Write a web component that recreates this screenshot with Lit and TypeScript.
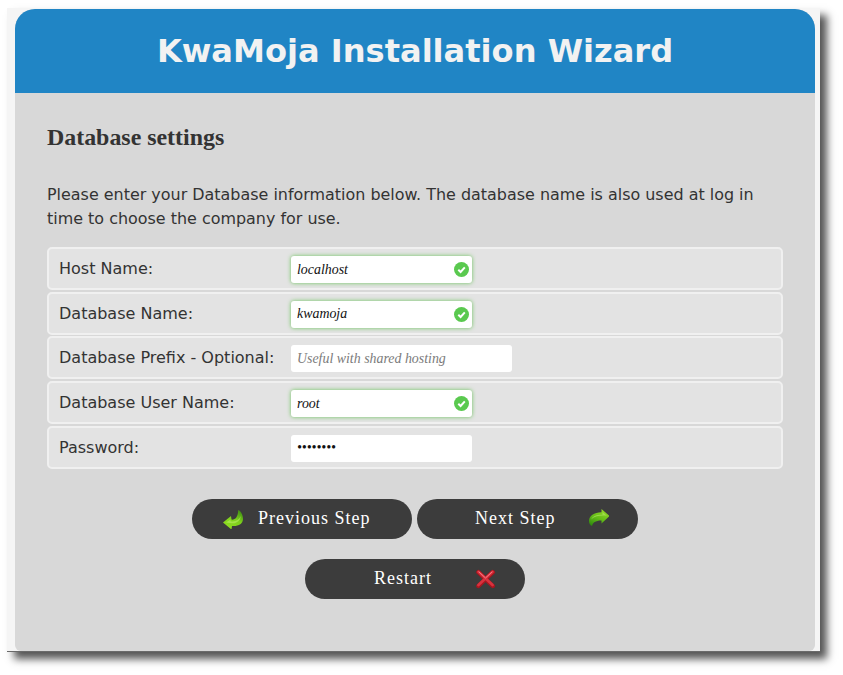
import { LitElement, html, css } from "lit";
import { customElement } from "lit/decorators.js";

const prevArrow = html`<svg class="ico" viewBox="0 0 20 20" width="20" height="20">
  <defs><linearGradient id="g1" x1="0.2" y1="0.9" x2="0.8" y2="0"><stop offset="0" stop-color="#8fdc20"/><stop offset="0.55" stop-color="#7ccf1c"/><stop offset="1" stop-color="#3f8f12"/></linearGradient></defs>
  <path d="M0 13.5 L8 7 L8.5 10.6 C12 11 15 8.5 15.2 1 C18 2 20 6 20 10 C20 15 15 17.6 9 17 L8.5 20.5 Z" fill="url(#g1)"/>
  <path d="M3 13.5 L7.5 10.5 V12.2 C12 13 16 11.5 17.6 7 C17.8 11.5 13.5 14.8 8.5 14.2 Z" fill="#bdf06a" opacity=".55"/>
</svg>`;

const nextArrow = html`<svg class="ico" viewBox="0 0 20 20" width="20" height="20">
  <defs><linearGradient id="g2" x1="0.7" y1="0" x2="0.2" y2="1"><stop offset="0" stop-color="#96da28"/><stop offset="0.55" stop-color="#62ba18"/><stop offset="1" stop-color="#2f8a0e"/></linearGradient></defs>
  <path d="M20.5 7 L12.5 0 V3.2 C5 3.2 0 7 0 12 C0 14.5 1.2 16.4 3 17 C3.6 13.6 6.8 11.3 12.5 11.4 V14.6 Z" fill="url(#g2)"/>
  <path d="M2 10.5 C3.5 7 7.5 5.4 13.5 5.8 V3 L17.8 6.8 C13.5 6.2 6.5 6.4 2 10.5 Z" fill="#c8f47e" opacity=".45"/>
</svg>`;

const check = html`<svg class="check" viewBox="0 0 15 15" width="15" height="15">
  <circle cx="7.5" cy="7.5" r="7.5" fill="#5ac94f"/>
  <path d="M4.3 7.8 L6.6 10 L10.8 5.4" fill="none" stroke="#fff" stroke-width="2"/>
</svg>`;

const cross = html`<svg class="ico" viewBox="0 0 21 20" width="21" height="20">
  <path d="M3.4 3.2 L17.8 17 M17.8 3.2 L3.4 17" fill="none" stroke="#a8161f" stroke-width="4.4" stroke-linecap="round"/>
  <path d="M3.4 2.8 L17.6 16 M17.6 2.8 L3.4 16" fill="none" stroke="#d9323e" stroke-width="2.6" stroke-linecap="round"/>
  <path d="M4 3 L10.5 9 L17 3" fill="none" stroke="#f4808a" stroke-width="1" stroke-linecap="round"/>
</svg>`;

@customElement("app-root")
export class AppRoot extends LitElement {
  static styles = css`
    :host { display: block; background: #fff; height: 675px; padding: 8px 0 0 7px; box-sizing: border-box; }
    .window { width: 813px; height: 644px; box-sizing: border-box; background: #f5f5f5; padding: 1px 5px 0 8px;
      border-bottom: 1px solid #6a6a6a; box-shadow: 7px 7px 8px #555; }
    .inner { height: 642px; background: #d8d8d8; border-radius: 20px 20px 6px 6px; overflow: hidden; }
    header { height: 84px; background: #2085c5; display: flex; align-items: center; justify-content: center; }
    h1 { margin: 0; font: bold 32.1px "DejaVu Sans", sans-serif; color: #f2f2f2; }
    main { padding: 0 32px; }
    h2 { margin: 0; padding-top: 29px; font: bold 23.9px/30px "Liberation Serif", serif; color: #333; }
    p { margin: 0; padding-top: 31px; font: 15.95px/24px "DejaVu Sans", sans-serif; color: #333; }
    .rows { display: grid; gap: 1.7px; margin-top: 16px; }
    .row { height: 43px; box-sizing: border-box; border: 2px solid #f0f0f0; border-radius: 5px; background: #e3e3e3;
      display: flex; align-items: center; padding-left: 10px; }
    label { width: 232px; font: 16px "DejaVu Sans", sans-serif; color: #333; }
    .field { position: relative; display: flex; margin-top: 2px; }
    input { box-sizing: border-box; width: 181px; height: 27px; border: 0; outline: 0; border-radius: 3px; background: #fff;
      padding: 0 6px; font: italic 13.9px "Liberation Serif", serif; color: #111; }
    input.wide { width: 221px; }
    input::placeholder { color: #7b7b7b; opacity: 1; }
    input.ok { box-shadow: 0 0 4px #6cc45c; }
    .check { position: absolute; right: 3px; top: 6px; }
    .buttons { display: flex; flex-direction: column; align-items: center; gap: 20px; margin-top: 30px; }
    .line { display: flex; gap: 5px; }
    .btn { width: 220px; height: 40px; box-sizing: border-box; border-radius: 20px; background: #3c3c3c; color: #fff; display: flex; align-items: center;
      font: 18px "Liberation Serif", serif; letter-spacing: 1px; }
    .btn span { padding-bottom: 1px; }
    .prev { padding-left: 31px; gap: 15px; }
    .next { width: 221px; padding-left: 58px; gap: 33px; }
    .restart { padding-left: 69px; gap: 43px; }
    .ico { flex: none; }
  `;

  render() {
    return html`<div class="window"><div class="inner">
      <header><h1>KwaMoja Installation Wizard</h1></header>
      <main>
        <h2>Database settings</h2>
        <p>Please enter your Database information below. The database name is also used at log in time to choose the company for use.</p>
        <div class="rows">
          <div class="row"><label>Host Name:</label><div class="field"><input class="ok" .value=${"localhost"} />${check}</div></div>
          <div class="row"><label>Database Name:</label><div class="field"><input class="ok" .value=${"kwamoja"} />${check}</div></div>
          <div class="row"><label>Database Prefix - Optional:</label><div class="field"><input class="wide" placeholder="Useful with shared hosting" /></div></div>
          <div class="row"><label>Database User Name:</label><div class="field"><input class="ok" .value=${"root"} />${check}</div></div>
          <div class="row"><label>Password:</label><div class="field"><input type="password" .value=${"password"} /></div></div>
        </div>
        <div class="buttons">
          <div class="line">
            <div class="btn prev">${prevArrow}<span>Previous Step</span></div>
            <div class="btn next"><span>Next Step</span>${nextArrow}</div>
          </div>
          <div class="btn restart"><span>Restart</span>${cross}</div>
        </div>
      </main>
    </div></div>`;
  }
}
